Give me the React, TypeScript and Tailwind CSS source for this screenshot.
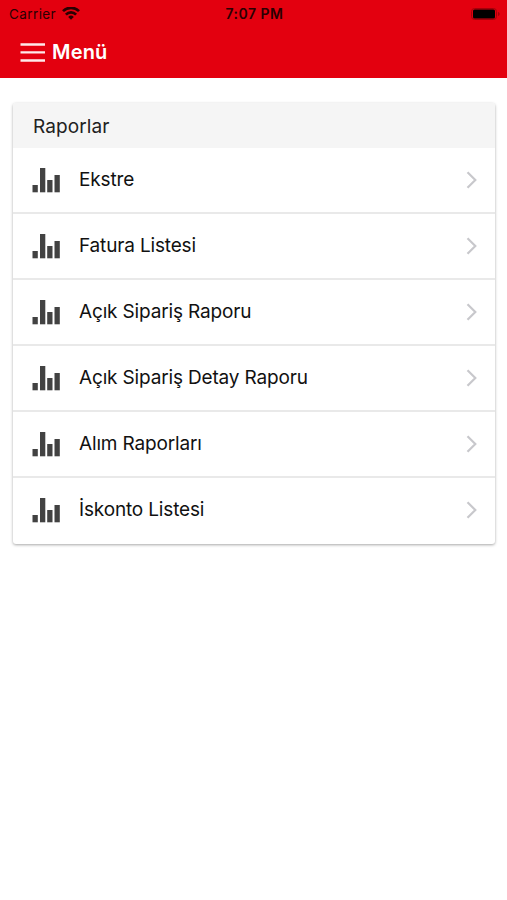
type Report = {
  id: string;
  title: string;
};

const reports: Report[] = [
  { id: "statement", title: "Ekstre" },
  { id: "invoices", title: "Fatura Listesi" },
  { id: "open-orders", title: "Açık Sipariş Raporu" },
  { id: "open-order-details", title: "Açık Sipariş Detay Raporu" },
  { id: "purchases", title: "Alım Raporları" },
  { id: "discounts", title: "İskonto Listesi" },
];

function WifiIcon() {
  return (
    <svg viewBox="0 0 18 14" className="h-[14px] w-[18px]" fill="none" stroke="#2a0002" strokeWidth="2.7">
      <path d="M1 4.1a11.4 11.4 0 0 1 16 0" />
      <path d="M3.9 7.6a7.1 7.1 0 0 1 10.2 0" />
      <path d="M9 12.7 6.2 9.9a4 4 0 0 1 5.6 0Z" fill="#2a0002" stroke="none" />
    </svg>
  );
}

function BatteryIcon() {
  return (
    <svg viewBox="0 0 30 14" className="h-[14px] w-[30px]">
      <rect x="1.5" y="1.5" width="25" height="11" rx="3" fill="none" stroke="#a3000a" />
      <rect x="3" y="2.5" width="22" height="9" rx="1.5" fill="#000" />
      <path d="M28 5v4c1.1-.4 1.7-1.1 1.7-2S29.1 5.4 28 5Z" fill="#a3000a" />
    </svg>
  );
}

function ChartIcon() {
  return (
    <svg viewBox="0 0 28 26" className="h-[26px] w-7 shrink-0" fill="#424242">
      <rect x="0.5" y="18" width="5.3" height="7.3" />
      <rect x="8" y="1" width="5.3" height="24.3" />
      <rect x="15.2" y="13" width="5.3" height="12.3" />
      <rect x="22.5" y="8" width="5.3" height="17.3" />
    </svg>
  );
}

function ChevronIcon() {
  return (
    <svg viewBox="0 0 12 18" className="h-[18px] w-3 shrink-0" fill="none" stroke="#c8c8cc" strokeWidth="2.2">
      <path d="m1.500 1.200 7.800 7.800-7.800 7.800" />
    </svg>
  );
}

export default function App() {
  return (
    <div className="flex h-[900px] w-[507px] flex-col bg-white font-['Inter',sans-serif] text-[#212121]">
      <header className="h-[78px] bg-[#e3000f]">
        {/* Status bar */}
        <div className="grid h-7 grid-cols-3 items-center pr-[7px] pl-[9px] text-[13.5px] text-[#2a0002]">
          <div className="flex items-center gap-1.5">
            <span className="tracking-[0.4px]">Carrier</span>
            <WifiIcon />
          </div>
          <span className="pb-0.5 text-center text-[14px] font-semibold tracking-[0.5px]">7:07 PM</span>
          <div className="flex justify-end pb-px">
            <BatteryIcon />
          </div>
        </div>

        {/* Menu bar */}
        <button aria-label="Menü" className="flex h-12 items-center gap-[7px] pl-5 text-white">
          <svg viewBox="0 0 25 20" className="h-5 w-[25px]" stroke="#ffe9ea" strokeWidth="2.4">
            <path d="M0.5 2.5h24.5M0.5 10.4h24.5M0.5 18.5h24.5" />
          </svg>
          <span className="text-[20px] font-semibold tracking-[0.2px]">Menü</span>
        </button>
      </header>

      <main className="pt-[25px] pr-3 pl-[13px]">
        <section className="overflow-hidden rounded-[3px] bg-white shadow-[0_1px_3px_rgba(0,0,0,0.35)]">
          <h2 className="flex h-[45px] items-center bg-[#f5f5f5] pt-[3px] pl-5 text-[19px] tracking-[0.1px]">
            Raporlar
          </h2>
          <ul>
            {reports.map((report) => (
              <li
                key={report.id}
                className="flex h-[66px] items-center border-b-2 border-[#e9e9e9] pr-[17px] pl-[19px] last:border-b-0 last:pb-0.5"
              >
                <ChartIcon />
                <span className="ml-[19px] flex-1 text-[19px] tracking-[-0.16px] text-[#111]">{report.title}</span>
                <ChevronIcon />
              </li>
            ))}
          </ul>
        </section>
      </main>
    </div>
  );
}
